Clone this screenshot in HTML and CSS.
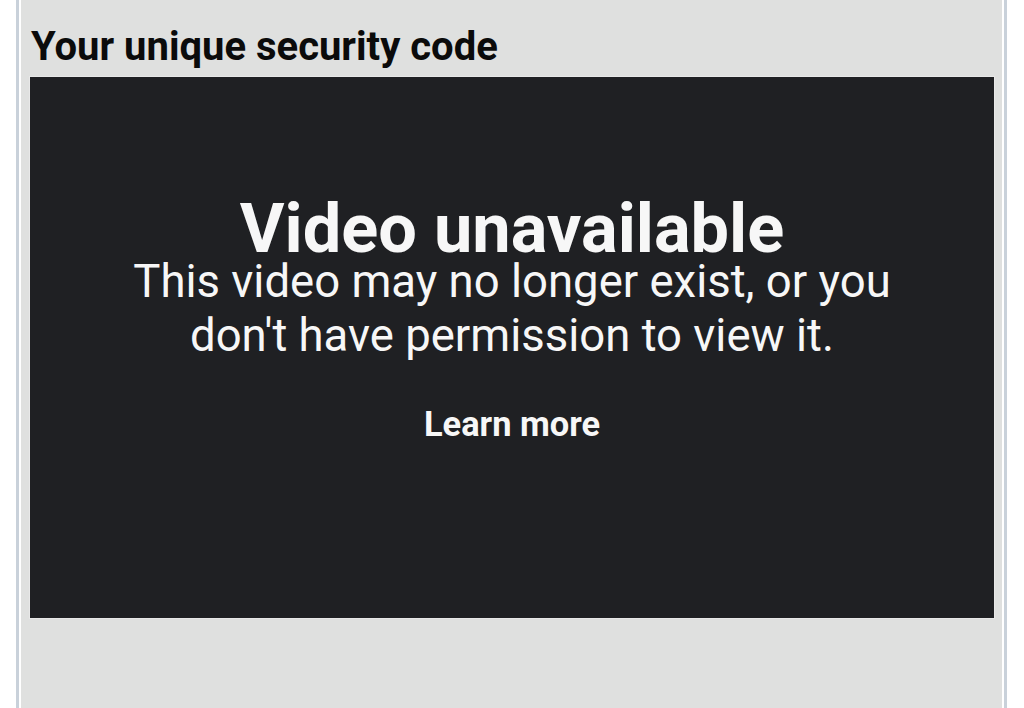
FILE: index.html
```html
<!DOCTYPE html>
<html lang="en">
<head>
<meta charset="utf-8">
<title>Your unique security code</title>
<link rel="stylesheet" href="styles.css">
</head>
<body>
  <div class="frame">
    <div class="panel">
      <h2 class="heading">Your unique security code</h2>
      <div class="video">
        <div class="message">
          <div class="title">Video unavailable</div>
          <div class="desc">This video may no longer exist, or you don't have permission to view it.</div>
          <a class="learn" href="#">Learn more</a>
        </div>
      </div>
    </div>
  </div>
</body>
</html>
```

FILE: styles.css
```css
html, body {
  margin: 0;
  padding: 0;
  background: #ffffff;
  height: 100%;
  overflow: hidden;
}

body {
  font-family: Roboto, "Liberation Sans", Arial, sans-serif;
}

.frame {
  margin: 0 17px 0 16px;
  border-left: 3px solid #c9d1da;
  border-right: 3px solid #c9d1da;
  padding: 0 2px;
  height: 708px;
  box-sizing: border-box;
}

.panel {
  background: #dfe0df;
  height: 100%;
  padding: 23px 8px 0 9px;
  box-sizing: border-box;
}

.heading {
  margin: 0 0 7px 1px;
  font-size: 40px;
  line-height: 47px;
  font-weight: 700;
  color: #0b0b0b;
}

.video {
  background: #1f2023;
  height: 541px;
  box-shadow: 0 0 0 1px #e8e8e8;
  display: flex;
  justify-content: center;
}

.message {
  padding-top: 126px;
  text-align: center;
  color: #f7f7f7;
  width: 800px;
}

.title {
  font-size: 68.5px;
  line-height: 52px;
  font-weight: 700;
}

.desc {
  font-size: 45.5px;
  line-height: 54px;
  font-weight: 400;
}

.learn {
  display: block;
  margin-top: 41px;
  font-size: 34.4px;
  line-height: 40px;
  font-weight: 700;
  color: #f7f7f7;
  text-decoration: none;
}
```
